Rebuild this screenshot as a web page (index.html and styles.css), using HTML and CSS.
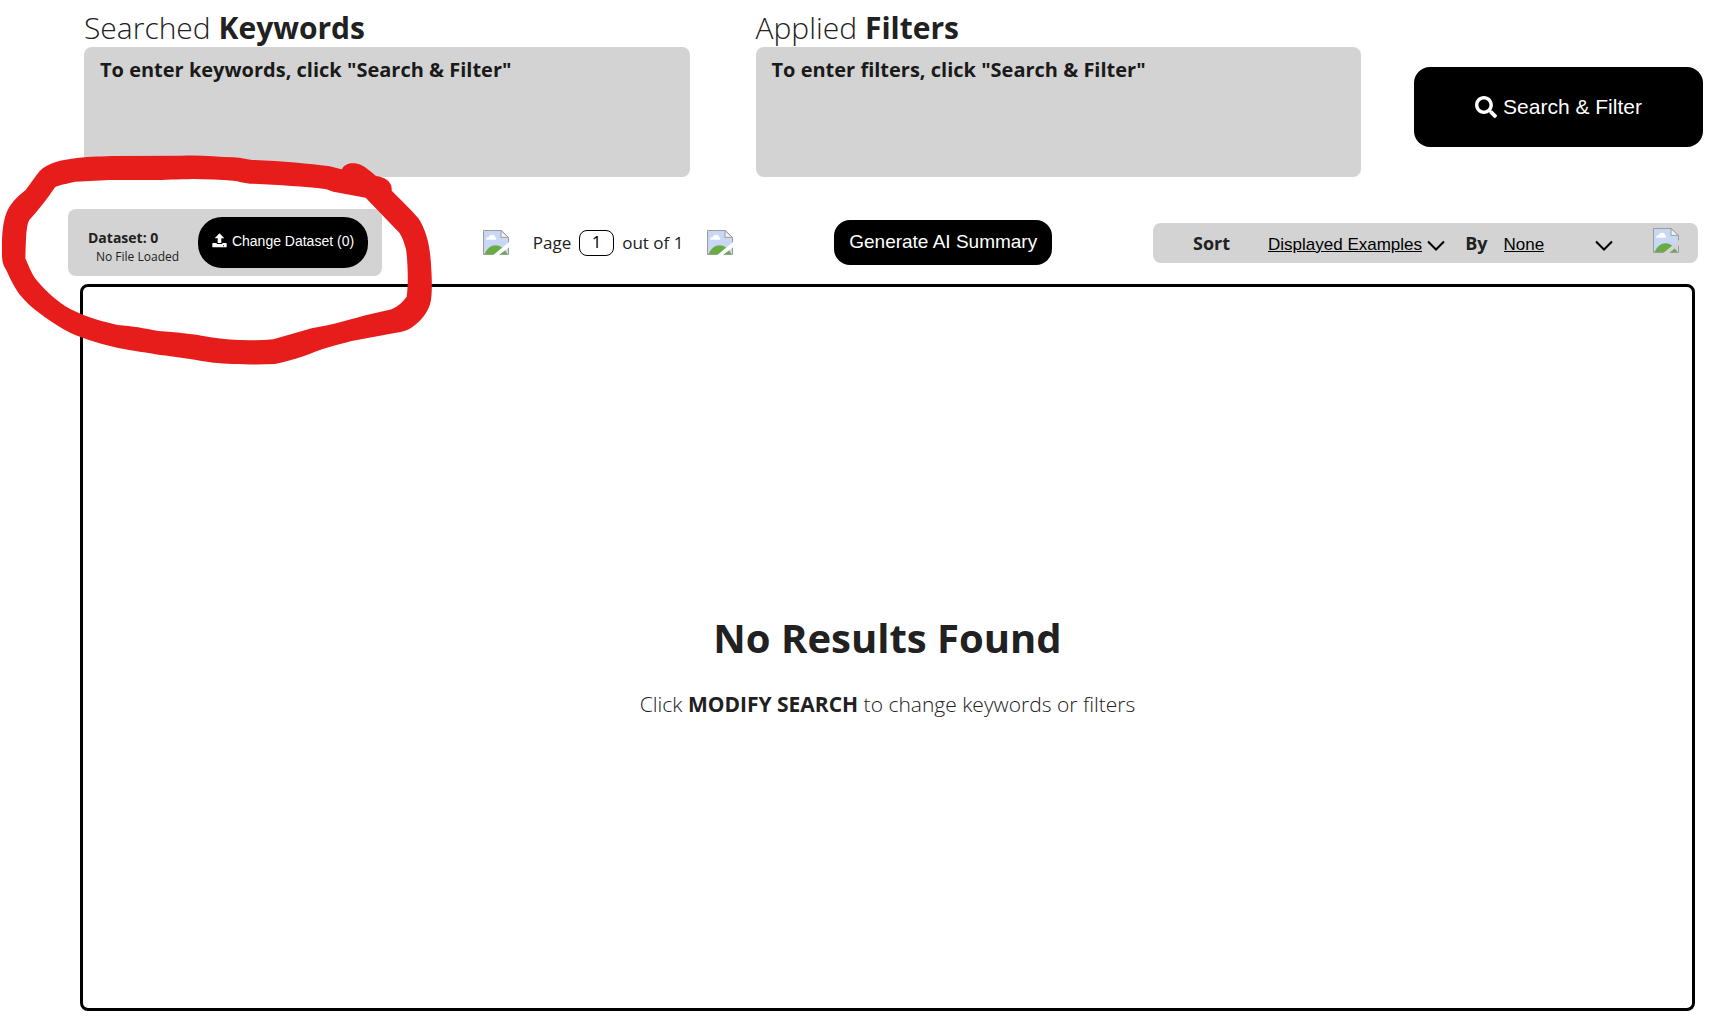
FILE: index.html
```html
<!DOCTYPE html>
<html lang="en">
<head>
<meta charset="utf-8">
<meta name="viewport" content="width=device-width, initial-scale=1">
<title>Dataset search</title>
<link rel="stylesheet" href="styles.css">
</head>
<body>
<svg class="defs" aria-hidden="true">
  <symbol id="picture" viewBox="0 0 78 75">
    <path d="M1.500 1.500H54L76.500 22V73.500H1.500Z" fill="#c8d7f4"/>
    <path d="M10 29q-1-7 7-8q4-8 12-7q7 1 8 8q5 2 2 7z" fill="#fff"/>
    <path d="M4 73q12-27 34-27q20 0 36 27z" fill="#6aab46"/>
    <path d="M1.500 1.500H54L76.500 22V73.500H1.500Z" fill="none" stroke="#9c9c9c" stroke-width="3"/>
    <path d="M54 2V22H76Z" fill="#f4f4f4" stroke="#9c9c9c" stroke-width="3"/>
    <path d="M78 36V52L48 75H31Z" fill="currentColor"/>
  </symbol>
  <symbol id="chevron" viewBox="0 0 18 12">
    <path d="M1 1.500L9 9.500L17 1.500" fill="none" stroke="#000" stroke-width="2"/>
  </symbol>
</svg>
<main class="page">
  <header class="top">
    <div class="terms">
      <section>
        <h2 class="title">Searched <b>Keywords</b></h2>
        <div class="box">To enter keywords, click "Search &amp; Filter"</div>
      </section>
      <section>
        <h2 class="title">Applied <b>Filters</b></h2>
        <div class="box">To enter filters, click "Search &amp; Filter"</div>
      </section>
    </div>
    <button class="btn btn-search" type="button">
      <svg width="22" height="22" viewBox="0 0 512 512" aria-hidden="true"><path fill="#fff" d="M505 442.700L405.300 343c-4.500-4.500-10.600-7-17-7H372c27.600-35.300 44-79.700 44-128C416 93.100 322.900 0 208 0S0 93.100 0 208s93.100 208 208 208c48.300 0 92.700-16.400 128-44v16.300c0 6.400 2.500 12.500 7 17l99.700 99.700c9.400 9.400 24.600 9.400 33.900 0l28.300-28.300c9.400-9.400 9.400-24.600.1-34zM208 336c-70.700 0-128-57.200-128-128 0-70.700 57.200-128 128-128 70.700 0 128 57.200 128 128 0 70.700-57.200 128-128 128z"/></svg>
      Search &amp; Filter
    </button>
  </header>

  <div class="toolbar">
    <div class="dataset">
      <div class="dataset-info">
        <div class="dataset-name">Dataset: 0</div>
        <div class="dataset-file">No File Loaded</div>
      </div>
      <button class="btn btn-change" type="button">
        <svg width="15" height="15" viewBox="0 0 45 45" aria-hidden="true"><path fill="#fff" d="M22.500 1L37 16H28V30H17V16H8ZM3 30H14V33H31V30H42Q44 30 44 32V41Q44 43 42 43H3Q1 43 1 41V32Q1 30 3 30ZM33 37V40H36V37Z" fill-rule="evenodd"/></svg>
        Change Dataset (0)
      </button>
    </div>

    <div class="pager">
      <button class="icon-btn" type="button" aria-label="Previous page"><svg width="26" height="25"><use href="#picture"/></svg></button>
      <label class="pager-text">Page <input class="pager-input" type="text" value="1"> out of 1</label>
      <button class="icon-btn" type="button" aria-label="Next page"><svg width="26" height="25"><use href="#picture"/></svg></button>
    </div>

    <button class="btn btn-summary" type="button">Generate AI Summary</button>

    <div class="sort">
      <label class="sort-label" for="sort-what">Sort</label>
      <span class="pick pick-what">
        <select id="sort-what"><option>Displayed Examples</option></select>
        <svg width="18" height="12" aria-hidden="true"><use href="#chevron"/></svg>
      </span>
      <label class="sort-label" for="sort-by">By</label>
      <span class="pick pick-by">
        <select id="sort-by"><option>None</option></select>
        <svg width="18" height="12" aria-hidden="true"><use href="#chevron"/></svg>
      </span>
      <button class="icon-btn icon-btn-sort" type="button" aria-label="Sort order"><svg width="26" height="25"><use href="#picture"/></svg></button>
    </div>
  </div>

  <section class="results">
    <h1 class="results-title">No Results Found</h1>
    <p class="results-hint">Click <b>MODIFY SEARCH</b> to change keywords or filters</p>
  </section>
</main>

<svg class="marker" width="440" height="220" viewBox="0 0 1320 660" aria-hidden="true">
  <path fill="#e71d1c" fill-rule="evenodd" d="M6 300C5 250 10 215 18 192C30 160 50 142 77 120L112 72C130 45 165 33 215 26C260 20 290 20 335 18L545 17C600 14 650 20 700 22C725 24 735 27 755 30C840 32 930 42 985 48C1005 52 1015 56 1026 58C1032 42 1050 38 1065 40C1085 42 1105 58 1128 78C1155 82 1178 95 1175 122C1200 148 1235 180 1255 205C1275 235 1288 275 1292 330C1296 380 1297 420 1293 450C1288 480 1270 505 1245 525C1220 545 1205 545 1180 550L1055 573C1010 585 980 592 945 605C915 618 860 635 825 642C760 645 690 642 640 638C590 630 530 620 475 614C420 605 380 600 345 592C290 578 235 562 195 540C140 508 90 472 60 435C40 408 28 380 20 362C8 345 5 330 6 300Z
  M165 112C140 150 115 180 88 210C78 225 78 270 76 325C85 345 92 365 105 385C130 415 160 445 195 468C240 495 290 510 352 525C400 528 430 535 475 543C530 547 570 550 632 562C690 572 760 573 820 568L935 535C1000 525 1060 505 1110 493L1175 478C1195 468 1210 455 1220 440C1226 400 1223 330 1218 298C1213 280 1208 262 1198 248L1097 143L1000 125C990 122 985 119 975 117C910 110 830 104 750 101C730 98 715 94 700 92C660 89 620 88 580 87C530 88 500 90 450 90H330L225 95C200 102 172 105 165 112Z"/>
</svg>
</body>
</html>
```
FILE: styles.css
```css
* { box-sizing: border-box; }

body {
  margin: 0;
  background: #fff;
  color: #212121;
  font-family: "Segoe UI", "Open Sans", "Noto Sans", sans-serif;
  font-weight: 300;
}

b { font-weight: 700; }

.defs { position: absolute; width: 0; height: 0; }

.page {
  display: flex;
  flex-direction: column;
  min-height: 100vh;
  padding: 8px 12px 9px 68px;
}

.top {
  display: flex;
  gap: 53px;
  padding-left: 16px;
}

.terms {
  flex: 1;
  display: grid;
  grid-template-columns: 1fr 1fr;
  gap: 66px;
}

.title {
  margin: 0;
  font-size: 30px;
  line-height: 39px;
  font-weight: 300;
}

.box {
  height: 130px;
  padding: 9px 16px;
  border-radius: 8px;
  background: #d3d3d3;
  color: #1a1a1a;
  font-size: 20px;
  line-height: 28px;
  font-weight: 700;
}

.btn {
  display: flex;
  align-items: center;
  justify-content: center;
  border: 0;
  padding: 0;
  background: #000;
  color: #fff;
  font-family: "Liberation Sans", Arial, sans-serif;
}

.btn-search {
  width: 289px;
  height: 80px;
  margin-top: 59px;
  gap: 6px;
  border-radius: 16px;
  font-size: 21px;
}

.toolbar {
  display: flex;
  align-items: center;
  justify-content: space-between;
  margin: 32px 5px 8px 0;
}

.dataset {
  display: flex;
  align-items: center;
  justify-content: space-between;
  width: 314px;
  height: 67px;
  padding: 0 14px 0 20px;
  border-radius: 8px;
  background: #d3d3d3;
}

.dataset-info { padding-top: 8px; }

.dataset-name {
  font-size: 14px;
  line-height: 20px;
  font-weight: 700;
}

.dataset-file {
  padding-left: 8px;
  font-size: 12px;
  line-height: 18px;
  font-weight: 400;
}

.btn-change {
  width: 170px;
  height: 51px;
  padding-bottom: 4px;
  gap: 5px;
  border-radius: 24px;
  font-size: 14px;
}

.icon-btn {
  display: flex;
  padding: 0;
  border: 0;
  background: none;
  color: #fff;
}

.icon-btn-sort {
  padding-bottom: 4px;
  color: #d3d3d3;
}

.pager {
  display: flex;
  align-items: center;
  gap: 24px;
}

.pager-text {
  display: flex;
  align-items: center;
  gap: 8px;
  font-size: 17px;
  line-height: 24px;
  font-weight: 400;
}

.pager-input {
  width: 35px;
  height: 26px;
  padding: 0 0 2px;
  border: 1px solid #000;
  border-radius: 8px;
  background: #fff;
  color: #000;
  font-family: inherit;
  font-size: 17px;
  text-align: center;
}

.btn-summary {
  width: 218px;
  height: 45px;
  padding-bottom: 2px;
  border-radius: 16px;
  font-size: 19px;
}

.sort {
  display: flex;
  align-items: center;
  width: 545px;
  height: 40px;
  padding: 0 19px 0 40px;
  border-radius: 8px;
  background: #d3d3d3;
}

.sort-label {
  font-size: 18px;
  line-height: 24px;
  font-weight: 700;
}

.pick {
  position: relative;
  display: flex;
  align-items: center;
}

.pick-what { width: 178px; margin: 0 20px 0 38px; }
.pick-by { width: 110px; margin: 0 40px 0 16px; }

.pick select {
  appearance: none;
  width: 100%;
  padding: 4px 0 0;
  border: 0;
  background: none;
  color: #000;
  font-family: "Liberation Sans", Arial, sans-serif;
  font-size: 17px;
  text-decoration: underline;
}

.pick svg {
  position: absolute;
  right: 0;
  bottom: 2px;
  pointer-events: none;
}

.results {
  flex: 1;
  display: flex;
  flex-direction: column;
  align-items: center;
  justify-content: center;
  gap: 24px;
  margin: 0 8px 0 12px;
  padding-top: 32px;
  border: 3px solid #000;
  border-radius: 8px;
}

.results-title {
  margin: 0;
  font-size: 40px;
  line-height: 56px;
  font-weight: 700;
}

.results-hint {
  margin: 0;
  font-size: 21px;
  line-height: 28px;
}

.marker {
  position: absolute;
  left: 0;
  top: 150px;
  pointer-events: none;
}
```
